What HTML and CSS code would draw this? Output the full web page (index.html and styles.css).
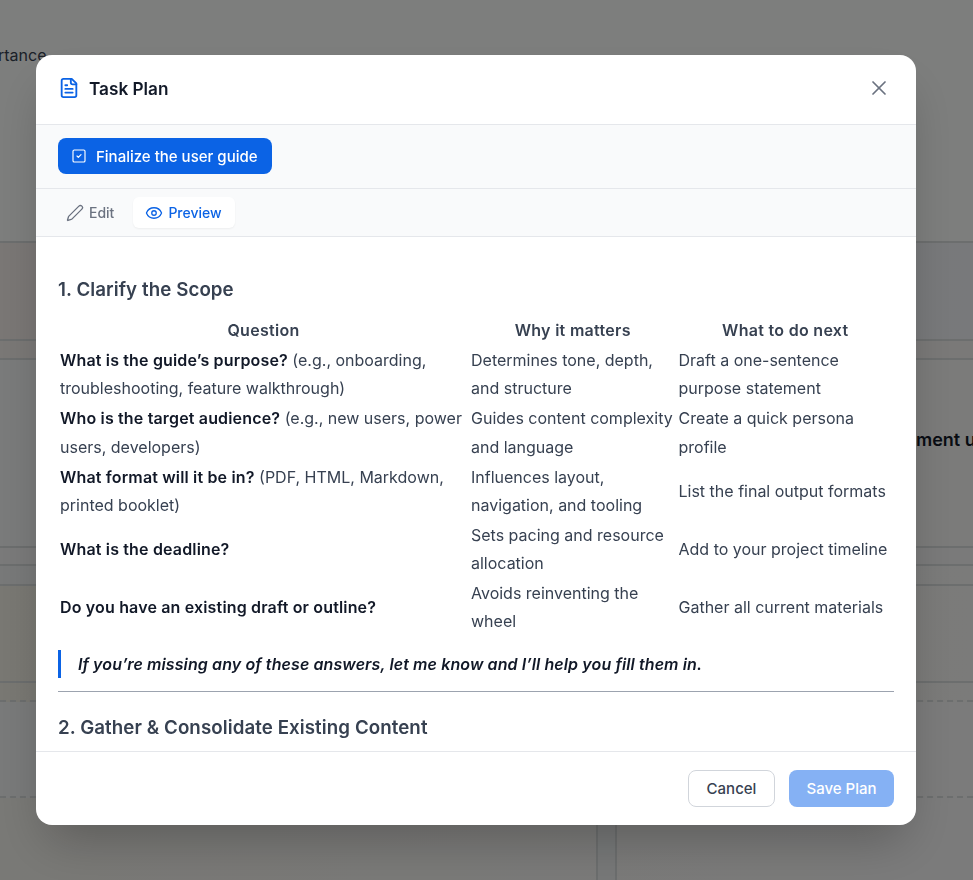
FILE: index.html
```html
<!DOCTYPE html>
<html>

<head>
    <title>Task Plan</title>
    <link rel="stylesheet" href="styles.css">
</head>

<body>
    <!-- page behind the dialog -->
    <div class="page">
        <div class="band band-top"><span class="band-text">rtance</span></div>
        <div class="band band-red"></div>
        <div class="band band-gap"></div>
        <div class="band band-mid"><span class="band-title">ment u</span></div>
        <div class="band band-gap-2"></div>
        <div class="band band-gap-3"></div>
        <div class="band band-olive"></div>
        <div class="band band-dash"></div>
        <div class="band band-low"></div>
        <div class="band band-bottom">
            <div class="rail"></div>
        </div>
    </div>

    <div class="overlay">
        <div class="modal">
            <div class="modal-head">
                <div class="modal-title">
                    <svg class="icon icon-doc" viewBox="0 0 24 24">
                        <path d="M15 2H6a2 2 0 0 0-2 2v16a2 2 0 0 0 2 2h12a2 2 0 0 0 2-2V7Z" />
                        <path d="M14 2v4a2 2 0 0 0 2 2h4" />
                        <path d="M10 9H8" />
                        <path d="M16 13H8" />
                        <path d="M16 17H8" />
                    </svg>
                    <span>Task Plan</span>
                </div>
                <svg class="icon icon-close" viewBox="0 0 24 24">
                    <path d="M18 6 6 18" />
                    <path d="m6 6 12 12" />
                </svg>
            </div>

            <div class="task-bar">
                <button class="task-chip">
                    <svg class="icon icon-check" viewBox="0 0 24 24">
                        <rect x="3" y="3" width="18" height="18" rx="2" />
                        <path d="m9 12 2 2 4-4" />
                    </svg>
                    Finalize the user guide
                </button>
            </div>

            <div class="tabs">
                <button class="tab">
                    <svg class="icon icon-tab" viewBox="0 0 24 24">
                        <path d="M21.174 6.812a1 1 0 0 0-3.986-3.987L3.842 16.174a2 2 0 0 0-.5.83l-1.321 4.352a.5.5 0 0 0 .623.622l4.353-1.32a2 2 0 0 0 .83-.497z" />
                    </svg>
                    Edit
                </button>
                <button class="tab tab-active">
                    <svg class="icon icon-tab" viewBox="0 0 24 24">
                        <path d="M2.062 12.348a1 1 0 0 1 0-.696 10.75 10.75 0 0 1 19.876 0 1 1 0 0 1 0 .696 10.75 10.75 0 0 1-19.876 0" />
                        <circle cx="12" cy="12" r="3" />
                    </svg>
                    Preview
                </button>
            </div>

            <div class="content">
                <h3>1. Clarify the Scope</h3>
                <table>
                    <colgroup>
                        <col class="col-a">
                        <col class="col-b">
                        <col class="col-c">
                    </colgroup>
                    <thead>
                        <tr>
                            <th>Question</th>
                            <th>Why it matters</th>
                            <th>What to do next</th>
                        </tr>
                    </thead>
                    <tbody>
                        <tr>
                            <td><strong>What is the guide’s purpose?</strong> (e.g., onboarding, troubleshooting, feature walkthrough)</td>
                            <td>Determines tone, depth, and structure</td>
                            <td>Draft a one-sentence purpose statement</td>
                        </tr>
                        <tr>
                            <td><strong>Who is the target audience?</strong> (e.g., new users, power users, developers)</td>
                            <td>Guides content complexity and language</td>
                            <td>Create a quick persona profile</td>
                        </tr>
                        <tr>
                            <td><strong>What format will it be in?</strong> (PDF, HTML, Markdown, printed booklet)</td>
                            <td>Influences layout, navigation, and tooling</td>
                            <td>List the final output formats</td>
                        </tr>
                        <tr>
                            <td><strong>What is the deadline?</strong></td>
                            <td>Sets pacing and resource allocation</td>
                            <td>Add to your project timeline</td>
                        </tr>
                        <tr>
                            <td><strong>Do you have an existing draft or outline?</strong></td>
                            <td>Avoids reinventing the wheel</td>
                            <td>Gather all current materials</td>
                        </tr>
                    </tbody>
                </table>
                <blockquote>If you’re missing any of these answers, let me know and I’ll help you fill them in.</blockquote>
                <hr>
                <h3>2. Gather &amp; Consolidate Existing Content</h3>
            </div>

            <div class="modal-foot">
                <button class="btn btn-cancel">Cancel</button>
                <button class="btn btn-save">Save Plan</button>
            </div>
        </div>
    </div>
</body>

</html>
```

FILE: styles.css
```css
html,
body {
    margin: 0;
    height: 880px;
    overflow: hidden;
    font-family: Inter, "Liberation Sans", sans-serif;
}

button {
    font-family: inherit;
    border: 0;
    cursor: pointer;
}

/* page behind the dialog */
.page {
    height: 880px;
    overflow: hidden;
    background: #fff;
}

.band {
    box-sizing: border-box;
    border-bottom: 2px solid #d8dcdc;
}

.band-top {
    height: 243px;
    background: #fafdfb;
    padding-top: 45px;
    font-size: 16px;
    color: #374151;
    overflow: hidden;
}

.band-text {
    display: block;
    margin-left: -2px;
}

.band-red {
    height: 98px;
    background: linear-gradient(90deg, #f5eeeb, #f0f3f6);
}

.band-gap {
    height: 19px;
    background: linear-gradient(90deg, #f4f0ed, #f5f3f1);
}

.band-mid {
    height: 188px;
    background: linear-gradient(90deg, #f4f6f6, #f7f6f5);
    padding: 69px 0 0 916px;
    font-size: 18px;
    font-weight: 600;
    white-space: nowrap;
    color: #111827;
}

.band-gap-2 {
    height: 18px;
    background: #f5f5f4;
}

.band-gap-3 {
    height: 20px;
    background: linear-gradient(90deg, #f0f3f3, #f6f6f5);
}

.band-olive {
    height: 97px;
    background: linear-gradient(90deg, #f3f1e6, #f7f6f4);
}

.band-dash {
    height: 19px;
    background: linear-gradient(90deg, #f3f1e6, #f7f6f4);
    border-bottom: 2px dashed #d8dcdc;
}

.band-low {
    height: 96px;
    background: linear-gradient(90deg, #f2f4f4, #f7f7f6);
    border-bottom: 2px dashed #d8dcdc;
}

.band-bottom {
    height: 83px;
    background: linear-gradient(90deg, #f3f2ec, #f7f7f7);
    border: 0;
    padding-left: 596px;
}

.rail {
    box-sizing: border-box;
    width: 21px;
    height: 100%;
    background: #eef1f1;
    border-left: 2px solid #d8dcdc;
    border-right: 2px solid #d8dcdc;
}

.overlay {
    position: fixed;
    top: 0;
    left: 0;
    width: 100%;
    height: 100%;
    background: rgba(0, 0, 0, 0.5);
}

/* dialog */
.modal {
    display: flex;
    flex-direction: column;
    box-sizing: border-box;
    width: 880px;
    height: 770px;
    margin: 55px 0 0 36px;
    background: #fff;
    border-radius: 16px;
    overflow: hidden;
    box-shadow: 0 25px 50px -12px rgba(0, 0, 0, 0.25);
}

.icon {
    fill: none;
    stroke: currentColor;
    stroke-width: 2;
    stroke-linecap: round;
    stroke-linejoin: round;
    flex: none;
}

.modal-head {
    display: flex;
    align-items: center;
    justify-content: space-between;
    height: 70px;
    box-sizing: border-box;
    padding: 0 25px 3px 22px;
    border-bottom: 1px solid #e5e7eb;
}

.modal-title {
    display: flex;
    align-items: center;
    gap: 9px;
    font-size: 17.2px;
    font-weight: 600;
    color: #111827;
}

.icon-doc {
    width: 22px;
    height: 22px;
    color: #0b63e5;
}

.icon-close {
    width: 24px;
    height: 24px;
    color: #6b7280;
    stroke-width: 1.75;
}

.task-bar {
    height: 64px;
    box-sizing: border-box;
    padding: 13px 22px 0;
    background: #f9fafb;
    border-bottom: 1px solid #e5e7eb;
}

.task-chip {
    display: flex;
    align-items: center;
    gap: 9px;
    height: 36px;
    padding: 0 14px 0 13px;
    border-radius: 8px;
    background: #0b63e5;
    color: #fff;
    font-size: 15px;
    font-weight: 500;
}

.icon-check {
    width: 16px;
    height: 16px;
    stroke-width: 1.75;
}

.tabs {
    display: flex;
    gap: 10px;
    height: 48px;
    box-sizing: border-box;
    padding: 8px 22px 0;
    background: #f9fafb;
    border-bottom: 1px solid #e5e7eb;
}

.tab {
    display: flex;
    align-items: center;
    gap: 5px;
    height: 31px;
    padding: 0 9px 0 8px;
    border-radius: 6px;
    background: transparent;
    color: #6b7280;
    font-size: 14px;
    font-weight: 500;
}

.tab-active {
    padding: 0 13px 0 12px;
    background: #fff;
    color: #0b63e5;
    box-shadow: 0 1px 2px rgba(0, 0, 0, 0.05);
}

.icon-tab {
    width: 18px;
    height: 18px;
    stroke-width: 1.75;
}

/* markdown preview */
.content {
    flex: 1;
    min-height: 0;
    overflow: hidden;
    padding: 0 22px;
    font-size: 16px;
    line-height: 28px;
    color: #374151;
}

.content h3 {
    margin: 38.5px 0 11.5px;
    font-size: 18.72px;
    line-height: 28px;
    font-weight: 600;
    letter-spacing: 0.08px;
}

table {
    width: 836px;
    table-layout: fixed;
    border-collapse: collapse;
}

.col-a {
    width: 411px;
}

.col-b {
    width: 207.5px;
}

.col-c {
    width: 217.5px;
}

th,
td {
    padding: 1px 2px;
    font-size: 16px;
    line-height: 28.125px;
}

th {
    font-weight: 600;
    letter-spacing: 0.3px;
    text-align: center;
}

strong {
    font-weight: 600;
    letter-spacing: 0.16px;
    color: #111827;
}

blockquote {
    margin: 14px 0 0;
    padding-left: 17px;
    border-left: 3px solid #0b63e5;
    font-style: italic;
    font-weight: 600;
    letter-spacing: 0.1px;
    color: #111827;
}

hr {
    margin: 13px 0 0;
    border: 0;
    border-top: 1px solid #9ca3af;
}

.content hr + h3 {
    margin-top: 22px;
}

.modal-foot {
    display: flex;
    justify-content: flex-end;
    gap: 14px;
    height: 74px;
    box-sizing: border-box;
    padding: 18px 22px 0;
    border-top: 1px solid #e5e7eb;
}

.btn {
    height: 37px;
    border-radius: 8px;
    font-size: 15px;
    font-weight: 500;
}

.btn-cancel {
    width: 87px;
    background: #fff;
    border: 1px solid #d1d5db;
    color: #374151;
}

.btn-save {
    width: 105px;
    background: #85b1f4;
    color: #fff;
}
```
